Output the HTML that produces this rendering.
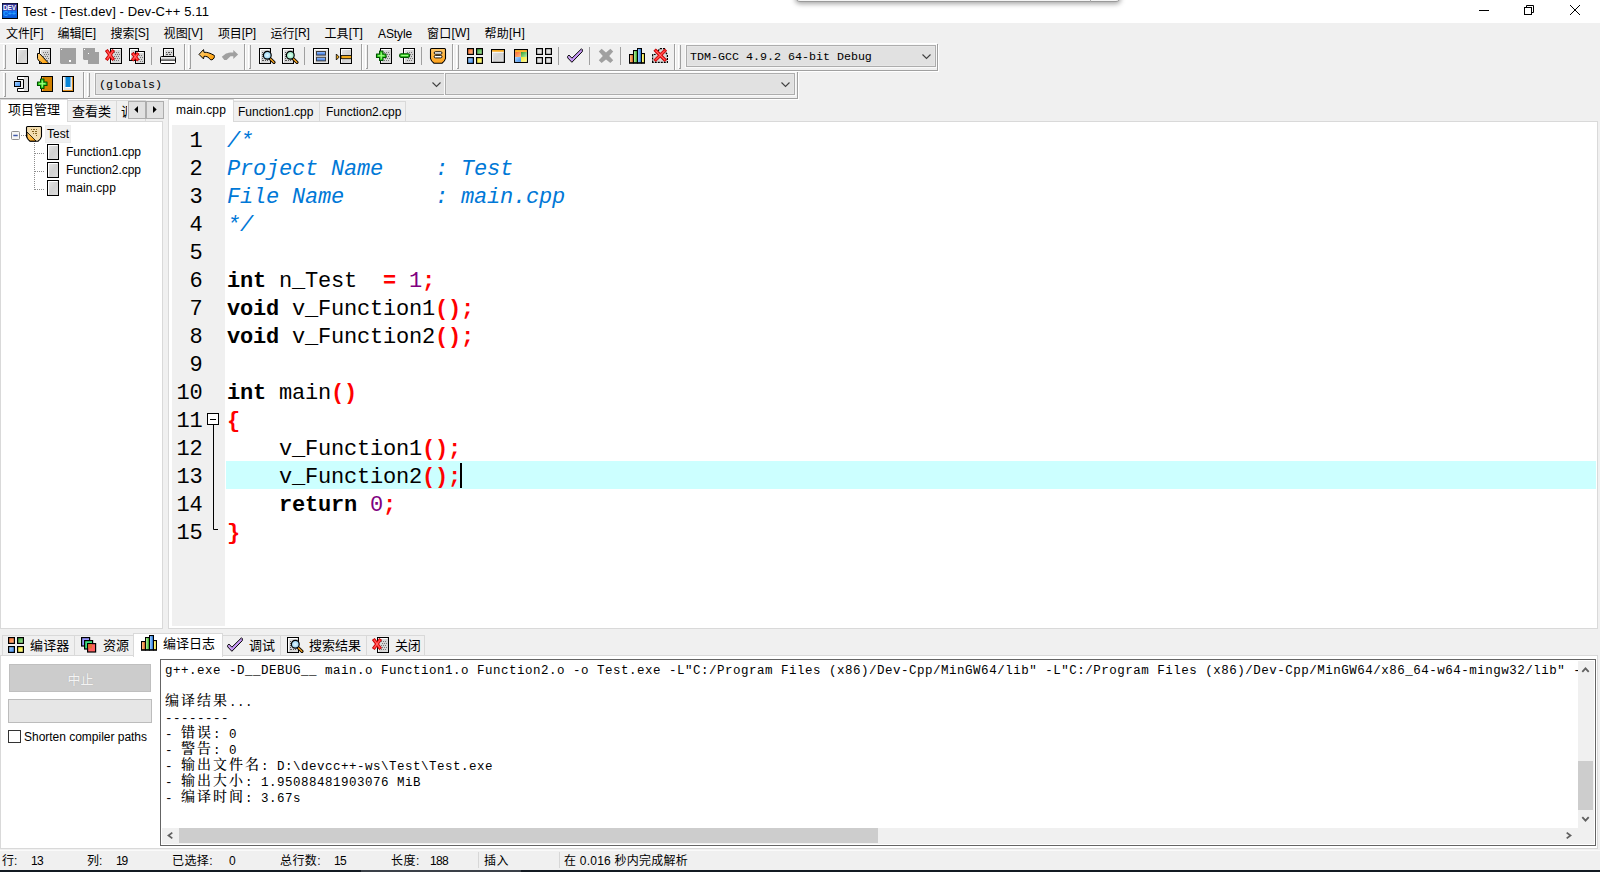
<!DOCTYPE html>
<html lang="zh-CN">
<head>
<meta charset="utf-8">
<title>Test - [Test.dev] - Dev-C++ 5.11</title>
<style>
*{box-sizing:border-box;margin:0;padding:0}
html,body{width:1600px;height:872px;overflow:hidden;background:#f0f0f0}
body{position:relative;font-family:"Liberation Sans","Noto Sans CJK SC",sans-serif;font-size:12px;color:#000;line-height:1}
.a{position:absolute}
.t{position:absolute;white-space:pre;line-height:16px;height:16px}
.ico{position:absolute;width:16px;height:16px;overflow:visible}
.band{position:absolute;border-right:1px solid #a0a0a0;border-bottom:1px solid #a0a0a0;box-shadow:1px 1px 0 #fff}
.grip{position:absolute;width:3px;border-left:1px solid #fff;}
.grip:before{content:"";position:absolute;left:1px;top:0;bottom:0;width:1px;background:#a0a0a0}
.grip:after{content:"";position:absolute;left:0;bottom:0;width:2px;height:1px;background:#a0a0a0}
.sep{position:absolute;width:1px;height:18px;top:47px;background:#a0a0a0}
.combo{position:absolute;background:#e1e1e1;border:1px solid #adadad;box-shadow:0 0 0 1px #e6e6e6 inset,0 0 0 1px #fafafa}
.combo span{position:absolute;left:3px;top:4px;font-family:"Liberation Mono",monospace;font-size:11.67px;line-height:15px;white-space:pre}
.combo svg{position:absolute;right:4px;top:8px;width:9px;height:6px}
.up{position:relative;top:-1px}
.mono{font-family:"Liberation Mono","Noto Serif CJK SC",monospace}
.tab{position:absolute;background:#f0f0f0;border:1px solid #d9d9d9;border-bottom:none}
.tab.on{background:#fff}
/* code */
#code{position:absolute;left:0;top:0;font-family:"Liberation Mono",monospace;font-size:22px;letter-spacing:-0.2px;white-space:pre;color:#000}
.ln{position:absolute;left:227px;height:28px;line-height:28px}
.num{position:absolute;left:172px;width:30.500px;text-align:right;height:28px;line-height:28px}
.c{color:#0078d7;font-style:italic}
.k{font-weight:bold}
.s{color:#ff0000;font-weight:bold}
.n{color:#800080}
.log{position:absolute;left:165px;height:16px;line-height:16px;white-space:pre;font-family:"Liberation Mono",monospace;font-size:12.5px;letter-spacing:0.5px}
.log i{position:relative;top:-1px;font-style:normal;font-family:"Noto Serif CJK SC",serif;font-weight:500;font-size:14px;letter-spacing:2px;line-height:0}
</style>
</head>
<body>

<svg width="0" height="0" style="position:absolute"><defs>
<linearGradient id="pg" x1="0" y1="0" x2="1" y2="1"><stop offset="0" stop-color="#e8e8e8"/><stop offset="0.5" stop-color="#d2d2d2"/><stop offset="1" stop-color="#dedede"/></linearGradient>
<linearGradient id="og" x1="0" y1="0" x2="1" y2="1"><stop offset="0" stop-color="#ffd27a"/><stop offset="1" stop-color="#ff9c00"/></linearGradient>
<linearGradient id="ov" x1="0" y1="0" x2="0" y2="1"><stop offset="0" stop-color="#ffc766"/><stop offset="1" stop-color="#ffa21a"/></linearGradient>
<linearGradient id="gor" x1="0" y1="0" x2="1" y2="1"><stop offset="0" stop-color="#ff6a2a"/><stop offset="1" stop-color="#ffc08a"/></linearGradient>
<linearGradient id="ggr" x1="0" y1="0" x2="1" y2="1"><stop offset="0" stop-color="#2fa030"/><stop offset="1" stop-color="#b8f0a8"/></linearGradient>
<linearGradient id="gbl" x1="0" y1="0" x2="1" y2="1"><stop offset="0" stop-color="#b0d8ff"/><stop offset="1" stop-color="#3c8cf0"/></linearGradient>
<linearGradient id="gye" x1="0" y1="0" x2="1" y2="1"><stop offset="0" stop-color="#f6e92a"/><stop offset="1" stop-color="#fffb9a"/></linearGradient>
<linearGradient id="gbar" x1="0" y1="0" x2="0" y2="1"><stop offset="0" stop-color="#9cc4ff"/><stop offset="1" stop-color="#2f6fe0"/></linearGradient>
<linearGradient id="gpur" x1="0" y1="0" x2="1" y2="1"><stop offset="0" stop-color="#e6ccff"/><stop offset="1" stop-color="#b070f0"/></linearGradient>
<radialGradient id="lensb"><stop offset="0" stop-color="#e8f8ff"/><stop offset="1" stop-color="#8fd0f0"/></radialGradient>
<radialGradient id="lensg"><stop offset="0" stop-color="#e8fff4"/><stop offset="1" stop-color="#90e8c0"/></radialGradient>
<linearGradient id="dvg" x1="0" y1="0" x2="0" y2="1"><stop offset="0" stop-color="#2b2a86"/><stop offset="0.45" stop-color="#3b4bb8"/><stop offset="0.55" stop-color="#0c6cf0"/><stop offset="1" stop-color="#0a5ad8"/></linearGradient>
</defs></svg>
<div class="a" style="left:0;top:0;width:1600px;height:23px;background:#fff"></div>
<div class="a" style="left:795px;top:-6px;width:326px;height:8px;border:1px solid #9a9a9a;border-radius:0 0 5px 5px;background:#f4f4f4;box-shadow:0 2px 5px rgba(0,0,0,.35)"><div class="a" style="left:294px;top:0;width:1px;height:7px;background:#aaa"></div></div>
<svg class="a" style="left:2px;top:3px;width:16px;height:16px" viewBox="0 0 16 16"><rect x="0" y="0" width="16" height="16" fill="#000"/><rect x="0.5" y="0.5" width="14.500" height="14.500" fill="url(#dvg)"/><text x="1" y="6.8" font-family="Liberation Sans,sans-serif" font-weight="bold" font-size="6.6" fill="#fff" textLength="13" lengthAdjust="spacingAndGlyphs">DEV</text><text x="1.3" y="13.300" font-family="Liberation Sans,sans-serif" font-weight="bold" font-size="6.6" fill="#2aa0ff" textLength="12.500" lengthAdjust="spacingAndGlyphs">C++</text></svg>
<span id="x1" class="t " style="left:23px;top:4px;font-size:13px;letter-spacing:0.107px;">Test - [Test.dev] - Dev-C++ 5.11</span>
<svg class="a" style="left:1470px;top:0;width:130px;height:23px" viewBox="0 0 130 23" fill="none" stroke="#000" stroke-width="1"><path d="M9 10.5H19"/><rect x="54.5" y="7.5" width="7" height="7"/><path d="M56.5 7.5V5.5H63.500V12.5H61.5"/><path d="M100 5L110 15M110 5L100 15"/></svg>
<span id="x2" class="t " style="left:6.0px;top:26px;letter-spacing:-0.103px;">文件<span class="up">[F]</span></span>
<span id="x3" class="t " style="left:57.5px;top:26px;letter-spacing:-0.037px;">编辑<span class="up">[E]</span></span>
<span id="x4" class="t " style="left:110.5px;top:26px;letter-spacing:-0.037px;">搜索<span class="up">[S]</span></span>
<span id="x5" class="t " style="left:163.5px;top:26px;letter-spacing:0.163px;">视图<span class="up">[V]</span></span>
<span id="x6" class="t " style="left:218.0px;top:26px;letter-spacing:-0.138px;">项目<span class="up">[P]</span></span>
<span id="x7" class="t " style="left:270.5px;top:26px;letter-spacing:0.028px;">运行<span class="up">[R]</span></span>
<span id="x8" class="t " style="left:324.5px;top:26px;letter-spacing:0.097px;">工具<span class="up">[T]</span></span>
<span id="x9" class="t " style="left:378.0px;top:26px;letter-spacing:-0.115px;">AStyle</span>
<span id="x10" class="t " style="left:427.0px;top:26px;letter-spacing:0.197px;">窗口<span class="up">[W]</span></span>
<span id="x11" class="t " style="left:484.5px;top:26px;letter-spacing:0.228px;">帮助<span class="up">[H]</span></span>
<div class="a" style="left:0;top:43px;width:937px;height:1px;background:#fff"></div>
<div class="band" style="left:0px;top:44px;width:185px;height:27px"></div>
<div class="band" style="left:185px;top:44px;width:60px;height:27px"></div>
<div class="band" style="left:245px;top:44px;width:117px;height:27px"></div>
<div class="band" style="left:362px;top:44px;width:91px;height:27px"></div>
<div class="band" style="left:453px;top:44px;width:222px;height:27px"></div>
<div class="band" style="left:675px;top:44px;width:263px;height:27px"></div>
<div class="grip" style="left:3px;top:45px;height:24px"></div>
<div class="grip" style="left:188px;top:45px;height:24px"></div>
<div class="grip" style="left:248px;top:45px;height:24px"></div>
<div class="grip" style="left:365px;top:45px;height:24px"></div>
<div class="grip" style="left:456px;top:45px;height:24px"></div>
<div class="grip" style="left:678px;top:45px;height:24px"></div>
<svg class="ico" style="left:14px;top:48px" viewBox="0 0 16 16"><rect x="2.5" y="0.5" width="11" height="15" fill="url(#pg)" stroke="#000"/><path d="M3.5 14.5V1.5H12.5" fill="none" stroke="#fff"/></svg>
<svg class="ico" style="left:37px;top:48px" viewBox="0 0 16 16"><rect x="2.5" y="0.5" width="11" height="15" fill="url(#pg)" stroke="#000"/><path d="M3.5 14.5V1.5H12.5" fill="none" stroke="#fff"/><path d="M6 4h1v1h-1zM8 4h1v1h-1zM10 4h1v1h-1zM7 6h1v1h-1zM9 6h1v1h-1zM11 6h1v1h-1zM6 8h1v1h-1zM8 8h1v1h-1zM10 8h1v1h-1zM7 10h1v1h-1zM9 10h1v1h-1zM11 10h1v1h-1zM6 12h1v1h-1zM8 12h1v1h-1zM10 12h1v1h-1z" fill="#777"/><path d="M0.5 5.5H2.5L11 14.5V15.5H5.5L1.5 12.5L0.5 10.5Z" fill="url(#og)" stroke="#000"/></svg>
<svg class="ico" style="left:60px;top:48px" viewBox="0 0 16 16"><path d="M0 0H16V16H1L0 15Z" fill="#a0a0a0"/><rect x="1" y="1" width="1" height="1" fill="#fff"/><rect x="9" y="12" width="2" height="2" fill="#fff"/></svg>
<svg class="ico" style="left:83px;top:48px" viewBox="0 0 16 16"><path d="M0 0H12V4H16V16H5V12H1L0 11Z" fill="#a0a0a0"/><rect x="1" y="1" width="1" height="1" fill="#fff"/><rect x="5" y="5" width="1" height="1" fill="#fff"/></svg>
<svg class="ico" style="left:106px;top:48px" viewBox="0 0 16 16"><rect x="4.5" y="0.5" width="11" height="15" fill="url(#pg)" stroke="#000"/><path d="M5.5 14.5V1.5H14.5" fill="none" stroke="#fff"/><path d="M8 4h1v1h-1zM10 4h1v1h-1zM12 4h1v1h-1zM9 6h1v1h-1zM11 6h1v1h-1zM13 6h1v1h-1zM8 8h1v1h-1zM10 8h1v1h-1zM12 8h1v1h-1zM9 10h1v1h-1zM11 10h1v1h-1zM13 10h1v1h-1zM8 12h1v1h-1zM10 12h1v1h-1zM12 12h1v1h-1z" fill="#777"/><path d="M1.3 3.3L6.7 10.7M6.7 3.3L1.3 10.7" stroke="#b00000" stroke-width="3.4" stroke-linecap="square" fill="none"/><path d="M1.3 3.3L6.7 10.7M6.7 3.3L1.3 10.7" stroke="#ff2020" stroke-width="2.2" stroke-linecap="square" fill="none"/><path d="M1.3 3.3L6.7 10.7M6.7 3.3L1.3 10.7" stroke="#ff9090" stroke-width="0.7" fill="none"/></svg>
<svg class="ico" style="left:129px;top:48px" viewBox="0 0 16 16"><rect x="0.5" y="0.5" width="9" height="12" fill="url(#pg)" stroke="#000"/><path d="M1.5 11.5V1.5H8.5" fill="none" stroke="#fff"/><path d="M4 4h1v1h-1zM6 4h1v1h-1zM5 6h1v1h-1zM7 6h1v1h-1zM4 8h1v1h-1zM6 8h1v1h-1zM5 10h1v1h-1zM7 10h1v1h-1z" fill="#777"/><rect x="6.5" y="3.5" width="9" height="12" fill="url(#pg)" stroke="#000"/><path d="M7.5 14.5V4.5H14.5" fill="none" stroke="#fff"/><path d="M10 7h1v1h-1zM12 7h1v1h-1zM11 9h1v1h-1zM13 9h1v1h-1zM10 11h1v1h-1zM12 11h1v1h-1zM11 13h1v1h-1zM13 13h1v1h-1z" fill="#777"/><path d="M4.3 6.3L8.2 11.2M8.2 6.3L4.3 11.2" stroke="#b00000" stroke-width="3.4" stroke-linecap="square" fill="none"/><path d="M4.3 6.3L8.2 11.2M8.2 6.3L4.3 11.2" stroke="#ff2020" stroke-width="2.2" stroke-linecap="square" fill="none"/><path d="M4.3 6.3L8.2 11.2M8.2 6.3L4.3 11.2" stroke="#ff9090" stroke-width="0.7" fill="none"/></svg>
<svg class="ico" style="left:160px;top:48px" viewBox="0 0 16 16"><rect x="3.5" y="0.5" width="10" height="8" fill="url(#pg)" stroke="#000"/><path d="M4.5 7.5V1.5H12.5" stroke="#fff" fill="none"/><path d="M6 4h1v1h-1zM8 4h2v1h-2zM11 4h1v1h-1zM6 6h2v1h-2zM9 6h2v1h-2z" fill="#555"/><rect x="0.5" y="8.5" width="15" height="7" rx="1" fill="#fff" stroke="#000"/><rect x="1.5" y="9.5" width="13" height="2" fill="#d0d0d0"/><rect x="1" y="11.6" width="14" height="1" fill="#000"/></svg>
<svg class="ico" style="left:199px;top:48px" viewBox="0 0 16 16"><path d="M0 6.4L4.5 1.6L5 4.3C8 4 11 5 15.3 7.4C15.8 9 15 11 12.9 11.8C11.5 12 10.5 11 10 10C9 9 7.5 8.2 5 8.3L4.5 10.9Z" fill="url(#og)" stroke="#000" stroke-width="1" stroke-linejoin="round"/></svg>
<svg class="ico" style="left:222px;top:48px" viewBox="0 0 16 16"><path d="M16.1 6.4L11.3 1.9V4.5C8 4.3 6 4.8 4 5.6L-0.2 8.7L2.3 12H4.6L8.5 8.3H11.3V10.900Z" fill="#a0a0a0"/></svg>
<svg class="ico" style="left:259px;top:48px" viewBox="0 0 16 16"><rect x="0.5" y="0.5" width="11" height="15" fill="url(#pg)" stroke="#000"/><path d="M1.5 14.5V1.5H10.5" fill="none" stroke="#fff"/><path d="M3 4h1v1h-1zM3 6h1v1h-1zM3 8h1v1h-1zM3 10h1v1h-1zM3 12h2v1h-2zM6 12h1v1h-1zM8 12h1v1h-1z" fill="#555"/><path d="M10.8 10.3L15 14.4" stroke="#000" stroke-width="3.2" stroke-linecap="round"/><path d="M11 10.5L14.8 14.2" stroke="#f0a020" stroke-width="1.6" stroke-linecap="round"/><circle cx="8.3" cy="7.3" r="3.9" fill="url(#lensb)" stroke="#000" stroke-width="1.2"/></svg>
<svg class="ico" style="left:282px;top:48px" viewBox="0 0 16 16"><rect x="0.5" y="0.5" width="11" height="15" fill="url(#pg)" stroke="#000"/><path d="M1.5 14.5V1.5H10.5" fill="none" stroke="#fff"/><path d="M3 4h1v1h-1zM3 6h1v1h-1zM3 8h1v1h-1zM3 10h1v1h-1zM3 12h2v1h-2zM6 12h1v1h-1zM8 12h1v1h-1z" fill="#555"/><path d="M10.8 10.3L15 14.4" stroke="#000" stroke-width="3.2" stroke-linecap="round"/><path d="M11 10.5L14.8 14.2" stroke="#f0a020" stroke-width="1.6" stroke-linecap="round"/><circle cx="8.3" cy="7.3" r="3.9" fill="url(#lensg)" stroke="#000" stroke-width="1.2"/></svg>
<svg class="ico" style="left:313px;top:48px" viewBox="0 0 16 16"><rect x="0.5" y="0.5" width="15" height="15" fill="#e0e0e0" stroke="#000"/><path d="M1.5 14.5V1.5H14.5" stroke="#fff" fill="none"/><rect x="3.5" y="3.5" width="9" height="3.6" fill="url(#gbar)" stroke="#404040"/><rect x="3.5" y="9.3" width="9" height="3.6" fill="url(#gbar)" stroke="#404040"/></svg>
<svg class="ico" style="left:336px;top:48px" viewBox="0 0 16 16"><rect x="4.5" y="0.5" width="11" height="15" fill="url(#pg)" stroke="#000"/><path d="M5.5 14.5V1.5H14.5" stroke="#fff" fill="none"/><rect x="5" y="7.5" width="10.5" height="3.2" fill="#f0a818" stroke="#000" stroke-width="0.8"/><path d="M0.3 6L3.2 9L0.3 12Z" fill="#f0a818" stroke="#000" stroke-width="0.8"/></svg>
<svg class="ico" style="left:376px;top:48px" viewBox="0 0 16 16"><rect x="4.5" y="0.5" width="11" height="15" fill="url(#pg)" stroke="#000"/><path d="M5.5 14.5V1.5H14.5" fill="none" stroke="#fff"/><path d="M8 4h1v1h-1zM10 4h1v1h-1zM12 4h1v1h-1zM9 6h1v1h-1zM11 6h1v1h-1zM13 6h1v1h-1zM8 8h1v1h-1zM10 8h1v1h-1zM12 8h1v1h-1zM9 10h1v1h-1zM11 10h1v1h-1zM13 10h1v1h-1zM8 12h1v1h-1zM10 12h1v1h-1zM12 12h1v1h-1z" fill="#777"/><path d="M3.55 3H6.949999999999999V6.05H10.0V9.45H6.949999999999999V12.5H3.55V9.45H0.5V6.05H3.55Z" fill="#30d020" stroke="#005000" stroke-width="1.1" stroke-linejoin="round"/><path d="M5.25 4.6V10.9M2.1 7.75H8.4" stroke="#b0ff90" stroke-width="1"/></svg>
<svg class="ico" style="left:399px;top:48px" viewBox="0 0 16 16"><rect x="4.5" y="0.5" width="11" height="15" fill="url(#pg)" stroke="#000"/><path d="M5.5 14.5V1.5H14.5" fill="none" stroke="#fff"/><path d="M8 4h1v1h-1zM10 4h1v1h-1zM12 4h1v1h-1zM9 6h1v1h-1zM11 6h1v1h-1zM13 6h1v1h-1zM8 8h1v1h-1zM10 8h1v1h-1zM12 8h1v1h-1zM9 10h1v1h-1zM11 10h1v1h-1zM13 10h1v1h-1zM8 12h1v1h-1zM10 12h1v1h-1zM12 12h1v1h-1z" fill="#777"/><rect x="0.6" y="5.8" width="10" height="3.6" rx="1.6" fill="#30d020" stroke="#005000" stroke-width="1.1"/><path d="M2.2 7.6H9" stroke="#b0ff90" stroke-width="1"/></svg>
<svg class="ico" style="left:430px;top:48px" viewBox="0 0 16 16"><path d="M1.5 0.5H14.5Q15.5 0.5 15.5 1.5V10.5Q15 13 12 15.2H4Q1 13 0.5 10.5V1.5Q0.5 0.5 1.5 0.5Z" fill="url(#ov)" stroke="#000" stroke-width="1.1"/><rect x="4.2" y="3.700" width="7.8" height="2.5" rx="1.25" fill="#fff" stroke="#000" stroke-width="0.9"/><rect x="4.2" y="7.400" width="7.8" height="2.5" rx="1.25" fill="#fff" stroke="#000" stroke-width="0.9"/></svg>
<svg class="ico" style="left:467px;top:48px" viewBox="0 0 16 16"><rect x="0.6" y="0.6" width="5.8" height="5.8" fill="url(#gor)" stroke="#000" stroke-width="1.2"/><rect x="9.6" y="0.6" width="5.8" height="5.8" fill="url(#ggr)" stroke="#000" stroke-width="1.2"/><rect x="0.6" y="9.6" width="5.8" height="5.8" fill="url(#gbl)" stroke="#000" stroke-width="1.2"/><rect x="9.6" y="9.6" width="5.8" height="5.8" fill="url(#gye)" stroke="#000" stroke-width="1.2"/></svg>
<svg class="ico" style="left:490px;top:48px" viewBox="0 0 16 16"><rect x="1.6" y="1.6" width="12.8" height="12.8" fill="url(#pg)" stroke="#000" stroke-width="1.2"/><rect x="2.2" y="2.2" width="11.6" height="1.6" fill="#ffa500"/><rect x="2.2" y="3.8" width="11.6" height="0.9" fill="#fff"/><rect x="2.2" y="3.8" width="0.9" height="10" fill="#fff"/></svg>
<svg class="ico" style="left:513px;top:48px" viewBox="0 0 16 16"><rect x="1.6" y="1.6" width="12.8" height="12.8" fill="#fff" stroke="#000" stroke-width="1.2"/><rect x="2.2" y="2.2" width="11.6" height="1.6" fill="#ffa500"/><rect x="2.2" y="4" width="5.8" height="5" fill="url(#gor)"/><rect x="8" y="4" width="5.8" height="5" fill="url(#ggr)"/><rect x="2.2" y="9" width="5.8" height="4.8" fill="url(#gbl)"/><rect x="8" y="9" width="5.8" height="4.8" fill="url(#gye)"/></svg>
<svg class="ico" style="left:536px;top:48px" viewBox="0 0 16 16"><rect x="0.6" y="0.6" width="5.8" height="5.8" fill="#e4e4e4" stroke="#000" stroke-width="1.2"/><rect x="9.6" y="0.6" width="5.8" height="5.8" fill="#e4e4e4" stroke="#000" stroke-width="1.2"/><rect x="0.6" y="9.6" width="5.8" height="5.8" fill="#e4e4e4" stroke="#000" stroke-width="1.2"/><rect x="9.6" y="9.6" width="5.8" height="5.8" fill="#e4e4e4" stroke="#000" stroke-width="1.2"/></svg>
<svg class="ico" style="left:567px;top:48px" viewBox="0 0 16 16"><path d="M0.7 8.3L1.9 7L4.9 10.2L14.5 0.8L15.3 1.6V3.6L4.9 14.3L0.7 9.900Z" fill="url(#gpur)" stroke="#000" stroke-width="1" stroke-linejoin="round"/></svg>
<svg class="ico" style="left:598px;top:48px" viewBox="0 0 16 16"><path d="M3.6 0.8L8 4.4L12.4 0.8L15.2 3.6L11.2 8L15.2 12.2L12.4 15L8 11.4L3.6 15L0.8 12.2L4.8 8L0.8 3.600Z" fill="#a0a0a0"/></svg>
<svg class="ico" style="left:629px;top:48px" viewBox="0 0 16 16"><rect x="0.55" y="6.55" width="3.9" height="8.4" fill="#f08030" stroke="#000" stroke-width="1.1"/><rect x="1.2" y="7.2" width="1.2" height="7" fill="#ffc090"/><rect x="4.55" y="2.55" width="3.9" height="12.4" fill="#50c040" stroke="#000" stroke-width="1.1"/><rect x="5.2" y="3.2" width="1.2" height="11" fill="#c0f0a0"/><rect x="8.55" y="0.55" width="3.9" height="14.4" fill="#4090f0" stroke="#000" stroke-width="1.1"/><rect x="9.2" y="1.2" width="1.2" height="13" fill="#a0d0ff"/><rect x="12.55" y="5.55" width="2.9" height="9.4" fill="#f0e020" stroke="#000" stroke-width="1.1"/><rect x="13.2" y="6.2" width="1.2" height="8" fill="#ffffa0"/><rect x="0" y="14.4" width="16" height="1.2" fill="#000"/></svg>
<svg class="ico" style="left:652px;top:48px" viewBox="0 0 16 16"><path d="M0.6 14.4V6.5L3 6.5L8 0.6H12.5V3L15.4 6.5V14.4Z" fill="#d8d8d8" stroke="#000" stroke-width="1.2" stroke-dasharray="2 1"/><path d="M3.8 2.8L12.7 11.7M12.7 2.8L3.8 11.7" stroke="#b00000" stroke-width="3.4" stroke-linecap="square" fill="none"/><path d="M3.8 2.8L12.7 11.7M12.7 2.8L3.8 11.7" stroke="#ff2020" stroke-width="2.2" stroke-linecap="square" fill="none"/><path d="M3.8 2.8L12.7 11.7M12.7 2.8L3.8 11.7" stroke="#ff9090" stroke-width="0.7" fill="none"/></svg>
<div class="sep" style="left:151px"></div>
<div class="sep" style="left:304px"></div>
<div class="sep" style="left:421px"></div>
<div class="sep" style="left:558px"></div>
<div class="sep" style="left:589px"></div>
<div class="sep" style="left:620px"></div>
<div class="combo" style="left:686px;top:45px;width:250px;height:22px"><span>TDM-GCC 4.9.2 64-bit Debug</span><svg viewBox="0 0 9 6"><path d="M0.5 0.5L4.5 4.5L8.5 0.5" fill="none" stroke="#404040" stroke-width="1.1"/></svg></div>
<div class="band" style="left:0px;top:72px;width:84px;height:27px"></div>
<div class="band" style="left:84px;top:72px;width:714px;height:27px"></div>
<div class="grip" style="left:3px;top:73px;height:24px"></div>
<div class="grip" style="left:87px;top:73px;height:24px"></div>
<svg class="ico" style="left:14px;top:76px" viewBox="0 0 16 16"><path d="M3.5 0.5H14.5V15.5H3.5V12.5H9.500V3.5H3.5Z" fill="#fff" stroke="#000"/><rect x="10" y="1" width="4" height="14" fill="#dcdcdc"/><rect x="0.5" y="5.5" width="6" height="5" fill="url(#gbl)" stroke="#000"/></svg>
<svg class="ico" style="left:37px;top:76px" viewBox="0 0 16 16"><rect x="4.5" y="0.5" width="11" height="15" fill="#d08000" stroke="#000"/><rect x="5" y="1" width="1" height="14" fill="#ffb040"/><path d="M3.55 3H6.949999999999999V6.05H10.0V9.45H6.949999999999999V12.5H3.55V9.45H0.5V6.05H3.55Z" fill="#30d020" stroke="#005000" stroke-width="1.1" stroke-linejoin="round"/><path d="M5.25 4.6V10.9M2.1 7.75H8.4" stroke="#b0ff90" stroke-width="1"/></svg>
<svg class="ico" style="left:60px;top:76px" viewBox="0 0 16 16"><rect x="2.5" y="0.5" width="11" height="15" fill="#e6e6e6" stroke="#000"/><rect x="3" y="1" width="1" height="13" fill="#fff"/><rect x="12" y="1" width="1" height="14" fill="#e09020"/><rect x="3" y="14" width="10" height="1" fill="#e09020"/><rect x="5.500" y="1" width="5" height="10" fill="#0a86d8"/><rect x="5.500" y="11" width="5" height="1" fill="#fff"/></svg>
<div class="combo" style="left:95px;top:73px;width:351px;height:22px"><span>(globals)</span><svg viewBox="0 0 9 6"><path d="M0.5 0.5L4.5 4.5L8.5 0.5" fill="none" stroke="#404040" stroke-width="1.1"/></svg></div>
<div class="combo" style="left:445px;top:73px;width:350px;height:22px"><svg viewBox="0 0 9 6"><path d="M0.5 0.5L4.5 4.5L8.5 0.5" fill="none" stroke="#404040" stroke-width="1.1"/></svg></div>
<div class="a" style="left:0;top:121px;width:163px;height:508px;background:#fff;border:1px solid #d9d9d9"></div>
<div class="tab" style="left:67px;top:100px;width:50px;height:21px"></div>
<div class="tab" style="left:116px;top:100px;width:30px;height:21px"></div>
<div class="tab on" style="left:0px;top:99px;width:68px;height:23px"></div>
<span id="x12" class="t " style="left:8px;top:101.5px;font-size:13px;letter-spacing:-0.004px;">项目管理</span>
<span id="x13" class="t " style="left:72px;top:104px;font-size:13px;letter-spacing:-0.005px;">查看类</span>
<div class="a" style="left:121px;top:103px;width:6px;height:16px;overflow:hidden"><span class="t" style="left:0;top:1px;font-size:13px">调试</span></div>
<div class="a" style="left:128px;top:101px;width:18px;height:18px;background:#e1e1e1;border:1px solid #adadad"></div>
<div class="a" style="left:146px;top:101px;width:18px;height:18px;background:#e1e1e1;border:1px solid #adadad"></div>
<svg class="a" style="left:128px;top:101px;width:36px;height:18px" viewBox="128 101 36 18"><path d="M134.300 109.500L138 106V113ZM156.700 109.500L153 106V113Z" fill="#000"/></svg>
<svg class="a" style="left:0;top:122px;width:162px;height:90px" viewBox="0 122 162 90"><path d="M21 135.500H26M34.500 143V190M35 153.500H45M35 171.500H45M35 189.500H45" stroke="#8c8c8c" stroke-dasharray="1 1" fill="none" shape-rendering="crispEdges"/><rect x="11.5" y="131.500" width="8" height="8" rx="1" fill="#f6f6f6" stroke="#919191"/><path d="M13.300 135.500H17.700" stroke="#3f58a8" stroke-width="1.5"/></svg>
<div class="a" style="left:45px;top:125px;width:26px;height:18px;background:#f0f0f0;border:1px solid #ececec"></div>
<svg class="ico" style="left:26px;top:126px" viewBox="0 0 16 16"><path d="M1.5 0.5H14.5Q15.5 0.5 15.5 1.5V10.5Q15 13 12 15.200H4Q1 13 0.5 10.5V1.5Q0.5 0.5 1.5 0.5Z" fill="#f4deb0" stroke="#000" stroke-width="1.1"/><path d="M1 6L10 15H4Q1.2 13 1 10.500Z" fill="url(#og)" stroke="#000" stroke-width="0.8"/><path d="M5 3h1v1h-1zM7 3h2v1h-2zM10 3h1v1h-1zM6 5h2v1h-2zM9 5h2v1h-2zM7 7h1v1h-1zM9 7h2v1h-2zM10 9h1v1h-1z" fill="#806020"/></svg>
<span id="x14" class="t " style="left:47px;top:126px;letter-spacing:-0.004px;">Test</span>
<svg class="a" style="left:47px;top:144px;width:12px;height:16px" viewBox="0 0 12 16"><rect x="0.5" y="0.5" width="11" height="15" fill="url(#pg)" stroke="#000"/><path d="M1.5 14.5V1.5H10.5" fill="none" stroke="#fff"/></svg>
<span id="x15" class="t " style="left:66px;top:144px;letter-spacing:-0.030px;">Function1.cpp</span>
<svg class="a" style="left:47px;top:162px;width:12px;height:16px" viewBox="0 0 12 16"><rect x="0.5" y="0.5" width="11" height="15" fill="url(#pg)" stroke="#000"/><path d="M1.5 14.5V1.5H10.5" fill="none" stroke="#fff"/></svg>
<span id="x16" class="t " style="left:66px;top:162px;letter-spacing:-0.030px;">Function2.cpp</span>
<svg class="a" style="left:47px;top:180px;width:12px;height:16px" viewBox="0 0 12 16"><rect x="0.5" y="0.5" width="11" height="15" fill="url(#pg)" stroke="#000"/><path d="M1.5 14.5V1.5H10.5" fill="none" stroke="#fff"/></svg>
<span id="x17" class="t " style="left:66px;top:180px;letter-spacing:0.162px;">main.cpp</span>
<div class="a" style="left:168px;top:121px;width:1430px;height:508px;background:#fff;border:1px solid #d9d9d9"></div>
<div class="tab" style="left:233px;top:101px;width:87px;height:20px"></div>
<div class="tab" style="left:319px;top:101px;width:87px;height:20px"></div>
<div class="tab on" style="left:168px;top:99px;width:66px;height:23px"></div>
<span id="x18" class="t " style="left:176px;top:102px;letter-spacing:0.162px;">main.cpp</span>
<span id="x19" class="t " style="left:238px;top:104px;letter-spacing:0.008px;">Function1.cpp</span>
<span id="x20" class="t " style="left:326px;top:104px;letter-spacing:0.008px;">Function2.cpp</span>
<div class="a" style="left:172px;top:125px;width:53px;height:501px;background:#f0f0f0"></div>
<div class="a" style="left:226px;top:461px;width:1370px;height:28px;background:#ccffff"></div>
<div id="code">
<div class="num" style="top:128px">1</div><div class="ln" style="top:128px"><span class="c">/*</span></div>
<div class="num" style="top:156px">2</div><div class="ln" style="top:156px"><span class="c">Project Name    : Test</span></div>
<div class="num" style="top:184px">3</div><div class="ln" style="top:184px"><span class="c">File Name       : main.cpp</span></div>
<div class="num" style="top:212px">4</div><div class="ln" style="top:212px"><span class="c">*/</span></div>
<div class="num" style="top:240px">5</div><div class="ln" style="top:240px"></div>
<div class="num" style="top:268px">6</div><div class="ln" style="top:268px"><span class="k">int</span> n_Test  <span class="s">=</span> <span class="n">1</span><span class="s">;</span></div>
<div class="num" style="top:296px">7</div><div class="ln" style="top:296px"><span class="k">void</span> v_Function1<span class="s">();</span></div>
<div class="num" style="top:324px">8</div><div class="ln" style="top:324px"><span class="k">void</span> v_Function2<span class="s">();</span></div>
<div class="num" style="top:352px">9</div><div class="ln" style="top:352px"></div>
<div class="num" style="top:380px">10</div><div class="ln" style="top:380px"><span class="k">int</span> main<span class="s">()</span></div>
<div class="num" style="top:408px">11</div><div class="ln" style="top:408px"><span class="s">{</span></div>
<div class="num" style="top:436px">12</div><div class="ln" style="top:436px">    v_Function1<span class="s">();</span></div>
<div class="num" style="top:464px">13</div><div class="ln" style="top:464px">    v_Function2<span class="s">();</span></div>
<div class="num" style="top:492px">14</div><div class="ln" style="top:492px">    <span class="k">return</span> <span class="n">0</span><span class="s">;</span></div>
<div class="num" style="top:520px">15</div><div class="ln" style="top:520px"><span class="s">}</span></div>
</div>
<svg class="a" style="left:205px;top:405px;width:16px;height:130px" viewBox="205 405 16 130"><rect x="207.500" y="413.500" width="11" height="11" fill="#fff" stroke="#000"/><path d="M210 419.500H216" stroke="#000"/><path d="M213.500 425V529.500H218" stroke="#000" fill="none"/></svg>
<div class="a" style="left:460px;top:463px;width:2px;height:25px;background:#000"></div>
<div class="a" style="left:0;top:655px;width:1598px;height:194px;background:#fff;border:1px solid #d9d9d9"></div>
<div class="tab" style="left:2px;top:635px;width:73px;height:21px;border-bottom:1px solid #d9d9d9"></div>
<div class="tab" style="left:74px;top:635px;width:60px;height:21px;border-bottom:1px solid #d9d9d9"></div>
<div class="tab" style="left:222px;top:635px;width:59px;height:21px;border-bottom:1px solid #d9d9d9"></div>
<div class="tab" style="left:280px;top:635px;width:87px;height:21px;border-bottom:1px solid #d9d9d9"></div>
<div class="tab" style="left:366px;top:635px;width:59px;height:21px;border-bottom:1px solid #d9d9d9"></div>
<div class="tab on" style="left:133px;top:633px;width:90px;height:24px"></div>
<svg class="ico" style="left:8px;top:637px" viewBox="0 0 16 16"><rect x="0.6" y="0.6" width="5.8" height="5.8" fill="url(#gor)" stroke="#000" stroke-width="1.2"/><rect x="9.6" y="0.6" width="5.8" height="5.8" fill="url(#ggr)" stroke="#000" stroke-width="1.2"/><rect x="0.6" y="9.6" width="5.8" height="5.8" fill="url(#gbl)" stroke="#000" stroke-width="1.2"/><rect x="9.6" y="9.6" width="5.8" height="5.8" fill="url(#gye)" stroke="#000" stroke-width="1.2"/></svg>
<span id="x21" class="t " style="left:30px;top:638px;font-size:13px;letter-spacing:0.161px;">编译器</span>
<svg class="ico" style="left:80px;top:637px" viewBox="0 0 16 16"><rect x="1.6" y="0.6" width="8" height="8.400" fill="#9898ff" stroke="#000" stroke-width="1.2"/><rect x="4.6" y="3.600" width="8" height="8.400" fill="#40e080" stroke="#000" stroke-width="1.2"/><rect x="7.6" y="6.600" width="8" height="8.400" fill="#ff6060" stroke="#000" stroke-width="1.2"/><rect x="8.2" y="7.200" width="3.800" height="4.200" fill="#e07030"/></svg>
<span id="x22" class="t " style="left:103px;top:638px;font-size:13px;letter-spacing:-0.008px;">资源</span>
<svg class="ico" style="left:141px;top:635px" viewBox="0 0 16 16"><rect x="0.55" y="6.55" width="3.9" height="8.4" fill="#f08030" stroke="#000" stroke-width="1.1"/><rect x="1.2" y="7.2" width="1.2" height="7" fill="#ffc090"/><rect x="4.55" y="2.55" width="3.9" height="12.4" fill="#50c040" stroke="#000" stroke-width="1.1"/><rect x="5.2" y="3.2" width="1.2" height="11" fill="#c0f0a0"/><rect x="8.55" y="0.55" width="3.9" height="14.4" fill="#4090f0" stroke="#000" stroke-width="1.1"/><rect x="9.2" y="1.2" width="1.2" height="13" fill="#a0d0ff"/><rect x="12.55" y="5.55" width="2.9" height="9.4" fill="#f0e020" stroke="#000" stroke-width="1.1"/><rect x="13.2" y="6.2" width="1.2" height="8" fill="#ffffa0"/><rect x="0" y="14.4" width="16" height="1.2" fill="#000"/></svg>
<span id="x23" class="t " style="left:163px;top:636px;font-size:13px;letter-spacing:-0.004px;">编译日志</span>
<svg class="ico" style="left:227px;top:637px" viewBox="0 0 16 16"><path d="M0.7 8.3L1.9 7L4.9 10.2L14.5 0.8L15.3 1.6V3.6L4.9 14.3L0.7 9.900Z" fill="url(#gpur)" stroke="#000" stroke-width="1" stroke-linejoin="round"/></svg>
<span id="x24" class="t " style="left:249px;top:638px;font-size:13px;letter-spacing:-0.008px;">调试</span>
<svg class="ico" style="left:287px;top:637px" viewBox="0 0 16 16"><rect x="0.5" y="0.5" width="11" height="15" fill="url(#pg)" stroke="#000"/><path d="M1.5 14.5V1.5H10.5" fill="none" stroke="#fff"/><path d="M3 4h1v1h-1zM3 6h1v1h-1zM3 8h1v1h-1zM3 10h1v1h-1zM3 12h2v1h-2zM6 12h1v1h-1zM8 12h1v1h-1z" fill="#555"/><path d="M10.8 10.3L15 14.4" stroke="#000" stroke-width="3.2" stroke-linecap="round"/><path d="M11 10.5L14.8 14.2" stroke="#f0a020" stroke-width="1.6" stroke-linecap="round"/><circle cx="8.3" cy="7.3" r="3.9" fill="url(#lensb)" stroke="#000" stroke-width="1.2"/></svg>
<span id="x25" class="t " style="left:309px;top:638px;font-size:13px;letter-spacing:-0.004px;">搜索结果</span>
<svg class="ico" style="left:373px;top:637px" viewBox="0 0 16 16"><rect x="4.5" y="0.5" width="11" height="15" fill="url(#pg)" stroke="#000"/><path d="M5.5 14.5V1.5H14.5" fill="none" stroke="#fff"/><path d="M8 4h1v1h-1zM10 4h1v1h-1zM12 4h1v1h-1zM9 6h1v1h-1zM11 6h1v1h-1zM13 6h1v1h-1zM8 8h1v1h-1zM10 8h1v1h-1zM12 8h1v1h-1zM9 10h1v1h-1zM11 10h1v1h-1zM13 10h1v1h-1zM8 12h1v1h-1zM10 12h1v1h-1zM12 12h1v1h-1z" fill="#777"/><path d="M1.3 3.3L6.7 10.7M6.7 3.3L1.3 10.7" stroke="#b00000" stroke-width="3.4" stroke-linecap="square" fill="none"/><path d="M1.3 3.3L6.7 10.7M6.7 3.3L1.3 10.7" stroke="#ff2020" stroke-width="2.2" stroke-linecap="square" fill="none"/><path d="M1.3 3.3L6.7 10.7M6.7 3.3L1.3 10.7" stroke="#ff9090" stroke-width="0.7" fill="none"/></svg>
<span id="x26" class="t " style="left:395px;top:638px;font-size:13px;letter-spacing:-0.258px;">关闭</span>
<div class="a" style="left:9px;top:664px;width:142px;height:28px;background:#cccccc;border:1px solid #bfbfbf"></div>
<span id="x27" class="t " style="left:67.5px;top:671.5px;font-size:13px;letter-spacing:-0.008px;color:#f4f4f4;text-shadow:0 0 1px #a8a8a8">中止</span>
<div class="a" style="left:8px;top:699px;width:144px;height:24px;background:#e6e6e6;border:1px solid #bcbcbc"></div>
<div class="a" style="left:8px;top:730px;width:13px;height:13px;background:#fff;border:1px solid #333"></div>
<span id="x28" class="t " style="left:24px;top:729px;letter-spacing:-0.018px;">Shorten compiler paths</span>
<div class="a" style="left:160px;top:659px;width:1436px;height:187px;background:#fff;border:1px solid #646464"></div>
<div class="a" style="left:161px;top:660px;width:1417px;height:168px;overflow:hidden">
<div class="log" style="left:4px;top:3px">g++.exe -D__DEBUG__ main.o Function1.o Function2.o -o Test.exe -L"C:/Program Files (x86)/Dev-Cpp/MinGW64/lib" -L"C:/Program Files (x86)/Dev-Cpp/MinGW64/x86_64-w64-mingw32/lib" -</div>
<div class="log" style="left:4px;top:35px"><i>编译结果</i>...</div>
<div class="log" style="left:4px;top:51px">--------</div>
<div class="log" style="left:4px;top:67px">- <i>错误</i>: 0</div>
<div class="log" style="left:4px;top:83px">- <i>警告</i>: 0</div>
<div class="log" style="left:4px;top:99px">- <i>输出文件名</i>: D:\devcc++-ws\Test\Test.exe</div>
<div class="log" style="left:4px;top:115px">- <i>输出大小</i>: 1.95088481903076 MiB</div>
<div class="log" style="left:4px;top:131px">- <i>编译时间</i>: 3.67s</div>
</div>
<div class="a" style="left:1578px;top:661px;width:16px;height:183px;background:#f0f0f0"></div>
<div class="a" style="left:1578px;top:761px;width:15px;height:49px;background:#cdcdcd"></div>
<div class="a" style="left:162px;top:828px;width:1416px;height:16px;background:#f0f0f0"></div>
<div class="a" style="left:179px;top:828px;width:699px;height:15px;background:#cdcdcd"></div>
<svg class="a" style="left:160px;top:659px;width:1436px;height:187px" viewBox="160 659 1436 187" fill="none" stroke="#606060" stroke-width="1.8"><path d="M1582.300 671.800L1585.500 668.300L1588.700 671.800"/><path d="M1582.300 817.200L1585.500 820.700L1588.700 817.200"/><path d="M172.300 832.600L168.500 835.500L172.300 838.400"/><path d="M1566.700 832.600L1570.500 835.500L1566.700 838.400"/></svg>
<div class="a" style="left:0;top:850px;width:1600px;height:1px;background:#fafafa"></div>
<span id="x29" class="t " style="left:2px;top:853px;letter-spacing:0.078px;">行:</span>
<span id="x30" class="t " style="left:31px;top:853px;letter-spacing:-0.680px;">13</span>
<span id="x31" class="t " style="left:87px;top:853px;letter-spacing:0.078px;">列:</span>
<span id="x32" class="t " style="left:116px;top:853px;letter-spacing:-1.180px;">19</span>
<span id="x33" class="t " style="left:172px;top:853px;letter-spacing:0.414px;">已选择:</span>
<span id="x34" class="t " style="left:229px;top:853px;letter-spacing:-0.688px;">0</span>
<span id="x35" class="t " style="left:280px;top:853px;letter-spacing:0.414px;">总行数:</span>
<span id="x36" class="t " style="left:334px;top:853px;letter-spacing:-0.680px;">15</span>
<span id="x37" class="t " style="left:391px;top:853px;letter-spacing:0.552px;">长度:</span>
<span id="x38" class="t " style="left:430px;top:853px;letter-spacing:-0.677px;">188</span>
<span id="x39" class="t " style="left:484px;top:853px;letter-spacing:0.492px;">插入</span>
<span id="x40" class="t " style="left:564px;top:853px;letter-spacing:0.235px;">在 0.016 秒内完成解析</span>
<div class="a" style="left:478px;top:852px;width:1px;height:16px;background:#d7d7d7"></div>
<div class="a" style="left:559px;top:852px;width:1px;height:16px;background:#d7d7d7"></div>
<div class="a" style="left:0;top:870px;width:1600px;height:2px;background:#131a22"></div>
<div class="a" style="left:361px;top:870px;width:160px;height:2px;background:#3a4048"></div>
</body>
</html>
